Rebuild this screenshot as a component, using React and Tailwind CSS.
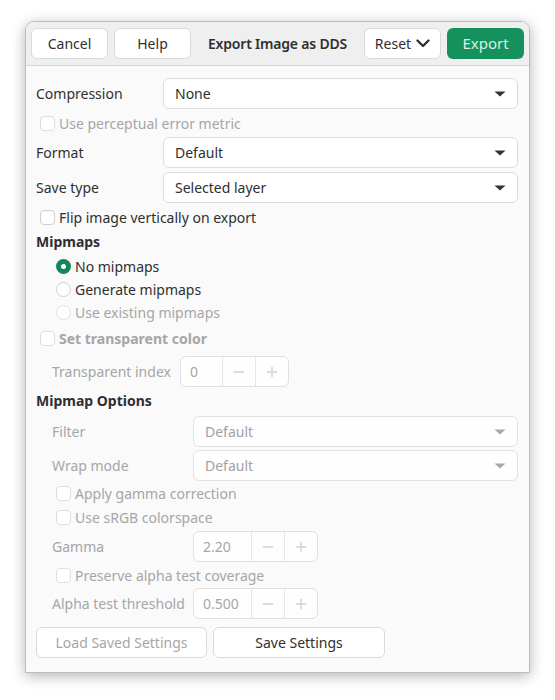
import { Minus, Plus } from 'lucide-react';

const Btn = ({ children, className = '', disabled = false }) => (
  <button
    type="button"
    className={`h-[31px] rounded-[6px] border border-[#dadada] bg-white text-[14px] flex items-center justify-center gap-[5px] ${
      disabled ? 'text-[#a6a6a6]' : 'text-[#2f2f2f]'
    } ${className}`}
  >
    {children}
  </button>
);

const Arrow = ({ disabled }) => (
  <svg width="12" height="6" viewBox="0 0 12 6" className="shrink-0">
    <path d="M0.5 0.5 L11.5 0.5 L6 5.5 Z" fill={disabled ? '#a8a8a8' : '#333333'} />
  </svg>
);

const Combo = ({ value, disabled = false }) => (
  <div
    className={`h-[31px] flex-1 rounded-[6px] border flex items-center justify-between pl-[11px] pr-[11px] text-[14px] ${
      disabled ? 'border-[#e2e2e2] bg-[#fefefe] text-[#a2a2a2]' : 'border-[#dcdcdc] bg-white text-[#2f2f2f]'
    }`}
  >
    <span>{value}</span>
    <Arrow disabled={disabled} />
  </div>
);

const Check = ({ label, disabled = false, bold = false, indent = false }) => (
  <div className={`flex items-center gap-[4px] h-full ${indent ? 'pl-[20px]' : 'pl-[4px]'}`}>
    <span className={`w-[15px] h-[15px] rounded-[4px] border bg-white ${disabled ? 'border-[#dedede]' : 'border-[#cfcfcf]'}`} />
    <span
      className={`text-[14px] ${disabled ? 'text-[#a6a6a6]' : 'text-[#2f2f2f]'} ${bold ? 'font-bold' : ''}`}
    >
      {label}
    </span>
  </div>
);

const Radio = ({ label, checked = false, disabled = false }) => (
  <div className="flex items-center gap-[4px] h-[23px] pl-[20px]">
    {checked ? (
      <span className="w-[15px] h-[15px] rounded-full bg-[#13875a] flex items-center justify-center">
        <span className="w-[5px] h-[5px] rounded-full bg-white" />
      </span>
    ) : (
      <span className={`w-[15px] h-[15px] rounded-full border bg-white ${disabled ? 'border-[#e2e2e2]' : 'border-[#cfcfcf]'}`} />
    )}
    <span className={`text-[14px] ${disabled ? 'text-[#a6a6a6]' : 'text-[#2f2f2f]'}`}>{label}</span>
  </div>
);

const Spin = ({ value, valueW }) => (
  <div className="h-[31px] flex rounded-[6px] border border-[#e0e0e0] bg-[#fefefe] text-[14px] text-[#a6a6a6]">
    <div className={`${valueW} flex items-center pl-[9px] border-r border-[#e6e6e6]`}>{value}</div>
    <div className="w-[33px] flex items-center justify-center border-r border-[#e6e6e6]">
      <Minus className="w-[16px] h-[16px] text-[#cfcfcf]" strokeWidth={2} />
    </div>
    <div className="w-[32px] flex items-center justify-center">
      <Plus className="w-[16px] h-[16px] text-[#cfcfcf]" strokeWidth={2} />
    </div>
  </div>
);

export default function App() {
  return (
    <div className="w-[555px] h-[700px] bg-white pt-[21px] pl-[25px]" style={{ fontFamily: '"Noto Sans", sans-serif' }}>
      <div className="w-[505px] h-[652px] rounded-t-[9px] border border-[#bdbdbd] bg-[#fafafa] shadow-[0_3px_14px_rgba(0,0,0,0.3)] flex flex-col overflow-hidden">
        {/* header bar */}
        <div className="h-[44px] shrink-0 bg-[#efefef] border-b border-[#d6d6d6] flex items-center pl-[5px] pr-[5px]">
          <Btn className="w-[77px]">Cancel</Btn>
          <Btn className="w-[77px] ml-[6px]">Help</Btn>
          <div className="flex-1 text-center text-[14px] font-semibold tracking-[-0.2px] text-[#2f2f2f]">Export Image as DDS</div>
          <Btn className="w-[77px]">
            Reset
            <svg width="14" height="9" viewBox="0 0 14 9" className="shrink-0">
              <polyline points="1.5,1.5 7,7 12.5,1.5" fill="none" stroke="#2f2f2f" strokeWidth="2.3" strokeLinecap="round" strokeLinejoin="round" />
            </svg>
          </Btn>
          <button
            type="button"
            className="w-[77px] h-[31px] ml-[6px] rounded-[6px] bg-[#15915e] text-[15px] text-[#d6f2e4]"
          >
            Export
          </button>
        </div>

        {/* body */}
        <div className="flex flex-col pt-[12px] pl-[10px] pr-[11px] text-[14px] text-[#2f2f2f]">
          <div className="flex items-center h-[31px]">
            <span className="w-[127px]">Compression</span>
            <Combo value="None" />
          </div>
          <div className="h-[28px]">
            <Check label="Use perceptual error metric" disabled />
          </div>
          <div className="flex items-center h-[31px]">
            <span className="w-[127px]">Format</span>
            <Combo value="Default" />
          </div>
          <div className="flex items-center h-[31px] mt-[4px]">
            <span className="w-[127px]">Save type</span>
            <Combo value="Selected layer" />
          </div>
          <div className="h-[28px]">
            <Check label="Flip image vertically on export" />
          </div>
          <div className="h-[20px] flex items-center font-bold">Mipmaps</div>
          <div className="flex flex-col pt-[4px]">
            <Radio label="No mipmaps" checked />
            <Radio label="Generate mipmaps" />
            <Radio label="Use existing mipmaps" disabled />
          </div>
          <div className="h-[28px]">
            <Check label="Set transparent color" disabled bold />
          </div>
          <div className="flex items-center h-[31px] mt-[4px] pl-[16px] gap-[9px]">
            <span className="text-[#a6a6a6]">Transparent index</span>
            <Spin value="0" valueW="w-[42px]" />
          </div>
          <div className="h-[26px] flex items-center font-bold">Mipmap Options</div>
          <div className="flex items-center h-[31px] mt-[3px] pl-[16px]">
            <span className="w-[141px] text-[#a6a6a6]">Filter</span>
            <Combo value="Default" disabled />
          </div>
          <div className="flex items-center h-[31px] mt-[3px] pl-[16px]">
            <span className="w-[141px] text-[#a6a6a6]">Wrap mode</span>
            <Combo value="Default" disabled />
          </div>
          <div className="h-[25px]">
            <Check label="Apply gamma correction" disabled indent />
          </div>
          <div className="h-[23px]">
            <Check label="Use sRGB colorspace" disabled indent />
          </div>
          <div className="flex items-center h-[31px] mt-[2px] pl-[16px]">
            <span className="w-[141px] text-[#a6a6a6]">Gamma</span>
            <Spin value="2.20" valueW="w-[58px]" />
          </div>
          <div className="h-[26px]">
            <Check label="Preserve alpha test coverage" disabled indent />
          </div>
          <div className="flex items-center h-[31px] pl-[16px]">
            <span className="w-[141px] text-[#a6a6a6]">Alpha test threshold</span>
            <Spin value="0.500" valueW="w-[58px]" />
          </div>
          <div className="flex items-center mt-[8px] gap-[6px]">
            <Btn className="w-[171px]" disabled>
              Load Saved Settings
            </Btn>
            <Btn className="w-[172px]">Save Settings</Btn>
          </div>
        </div>
      </div>
    </div>
  );
}
